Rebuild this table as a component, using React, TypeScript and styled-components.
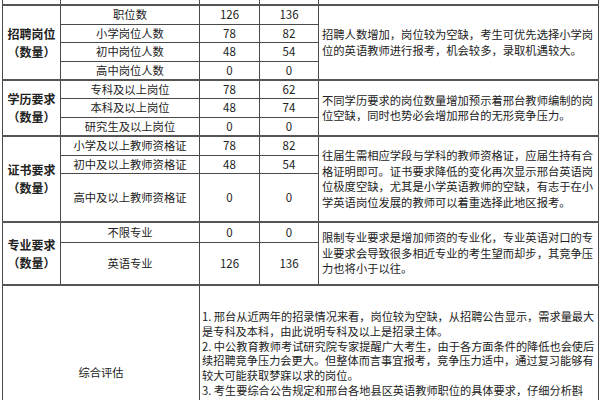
import React from "react";
import styled, { createGlobalStyle } from "styled-components";

const Global = createGlobalStyle`
  html, body { margin: 0; padding: 0; background: #fff; }
  body { font-family: "Noto Sans CJK SC", "Noto Sans", sans-serif; color: #222; }
`;

const Page = styled.div`
  width: 600px;
  height: 400px;
  overflow: hidden;
  padding-left: 2px;
  box-sizing: border-box;
`;

const Table = styled.table`
  border-collapse: collapse;
  table-layout: fixed;
  width: 596px;
  font-size: 11.3px;
`;

const Row = styled.tr<{ $h: number }>`
  height: ${(p) => p.$h}px;
`;

const Cell = styled.td<{ $sectionTop?: boolean }>`
  border: 1px solid #4a4a4a;
  border-top: ${(p) => (p.$sectionTop ? "2px solid #555" : "1px solid #4a4a4a")};
  padding: 0;
  text-align: center;
  vertical-align: middle;
  line-height: 15px;
  white-space: nowrap;
`;

const TopCell = styled.td`
  border-left: 1px solid #4a4a4a;
  border-right: 1px solid #4a4a4a;
  border-top: none;
  padding: 0;
`;

const LabelCell = styled(Cell)`
  font-weight: 700;
  font-size: 12px;
  line-height: 18px;
`;

const NumCell = styled(Cell)`
  font-size: 11.5px;
`;

const NoteCell = styled(Cell)`
  text-align: left;
  padding: 0 2px 0 3px;
  line-height: 15.5px;
`;

const SummaryCell = styled(Cell)`
  text-align: left;
  vertical-align: top;
  padding: 23px 1px 0 2px;
  line-height: 14.8px;
  font-size: 11.2px;
`;

const Line = styled.div`
  white-space: nowrap;
`;

type Section = {
  label: string;
  items: { name: string; a: number; b: number; h: number }[];
  note: string[];
};

const sections: Section[] = [
  {
    label: "招聘岗位",
    items: [
      { name: "职位数", a: 126, b: 136, h: 19 },
      { name: "小学岗位人数", a: 78, b: 82, h: 18 },
      { name: "初中岗位人数", a: 48, b: 54, h: 19 },
      { name: "高中岗位人数", a: 0, b: 0, h: 19 },
    ],
    note: [
      "招聘人数增加，岗位较为空缺，考生可优先选择小学岗",
      "位的英语教师进行报考，机会较多，录取机遇较大。",
    ],
  },
  {
    label: "学历要求",
    items: [
      { name: "专科及以上岗位", a: 78, b: 62, h: 18 },
      { name: "本科及以上岗位", a: 48, b: 74, h: 19 },
      { name: "研究生及以上岗位", a: 0, b: 0, h: 19 },
    ],
    note: [
      "不同学历要求的岗位数量增加预示着邢台教师编制的岗",
      "位空缺，同时也势必会增加邢台的无形竞争压力。",
    ],
  },
  {
    label: "证书要求",
    items: [
      { name: "小学及以上教师资格证", a: 78, b: 82, h: 19 },
      { name: "初中及以上教师资格证", a: 48, b: 54, h: 18 },
      { name: "高中及以上教师资格证", a: 0, b: 0, h: 49 },
    ],
    note: [
      "往届生需相应学段与学科的教师资格证，应届生持有合",
      "格证明即可。证书要求降低的变化再次显示邢台英语岗",
      "位极度空缺，尤其是小学英语教师的空缺，有志于在小",
      "学英语岗位发展的教师可以着重选择此地区报考。",
    ],
  },
  {
    label: "专业要求",
    items: [
      { name: "不限专业", a: 0, b: 0, h: 20 },
      { name: "英语专业", a: 126, b: 136, h: 43 },
    ],
    note: [
      "限制专业要求是增加师资的专业化，专业英语对口的专",
      "业要求会导致很多相近专业的考生望而却步，其竞争压",
      "力也将小于以往。",
    ],
  },
];

const summary = [
  "1. 邢台从近两年的招录情况来看，岗位较为空缺，从招聘公告显示，需求量最大",
  "是专科及本科，由此说明专科及以上是招录主体。",
  "2. 中公教育教师考试研究院专家提醒广大考生，由于各方面条件的降低也会使后",
  "续招聘竞争压力会更大。但整体而言事宜报考，竞争压力适中，通过复习能够有",
  "较大可能获取梦寐以求的岗位。",
  "3. 考生要综合公告规定和邢台各地县区英语教师职位的具体要求，仔细分析斟",
  "酌，同时借助中公教师职位检索系统进行职位对比，从而选出最心仪的职位，对",
  "症下药，有针对性地进行备考。",
];

export default function App() {
  return (
    <>
      <Global />
      <Page>
        <Table>
          <colgroup>
            <col style={{ width: 58 }} />
            <col style={{ width: 139 }} />
            <col style={{ width: 60 }} />
            <col style={{ width: 59 }} />
            <col style={{ width: 280 }} />
          </colgroup>
          <tbody>
            <Row $h={5}>
              <TopCell />
              <TopCell />
              <TopCell />
              <TopCell />
              <TopCell />
            </Row>
            {sections.map((s) =>
              s.items.map((it, i) => (
                <Row key={s.label + it.name} $h={it.h}>
                  {i === 0 && (
                    <LabelCell rowSpan={s.items.length} $sectionTop>
                      {s.label}
                      <br />
                      （数量）
                    </LabelCell>
                  )}
                  <Cell $sectionTop={i === 0}>{it.name}</Cell>
                  <NumCell $sectionTop={i === 0}>{it.a}</NumCell>
                  <NumCell $sectionTop={i === 0}>{it.b}</NumCell>
                  {i === 0 && (
                    <NoteCell rowSpan={s.items.length} $sectionTop>
                      {s.note.map((l) => (
                        <Line key={l}>{l}</Line>
                      ))}
                    </NoteCell>
                  )}
                </Row>
              ))
            )}
            <Row $h={174}>
              <Cell colSpan={2} $sectionTop>
                综合评估
              </Cell>
              <SummaryCell colSpan={3} $sectionTop>
                {summary.map((l) => (
                  <Line key={l}>{l}</Line>
                ))}
              </SummaryCell>
            </Row>
          </tbody>
        </Table>
      </Page>
    </>
  );
}
